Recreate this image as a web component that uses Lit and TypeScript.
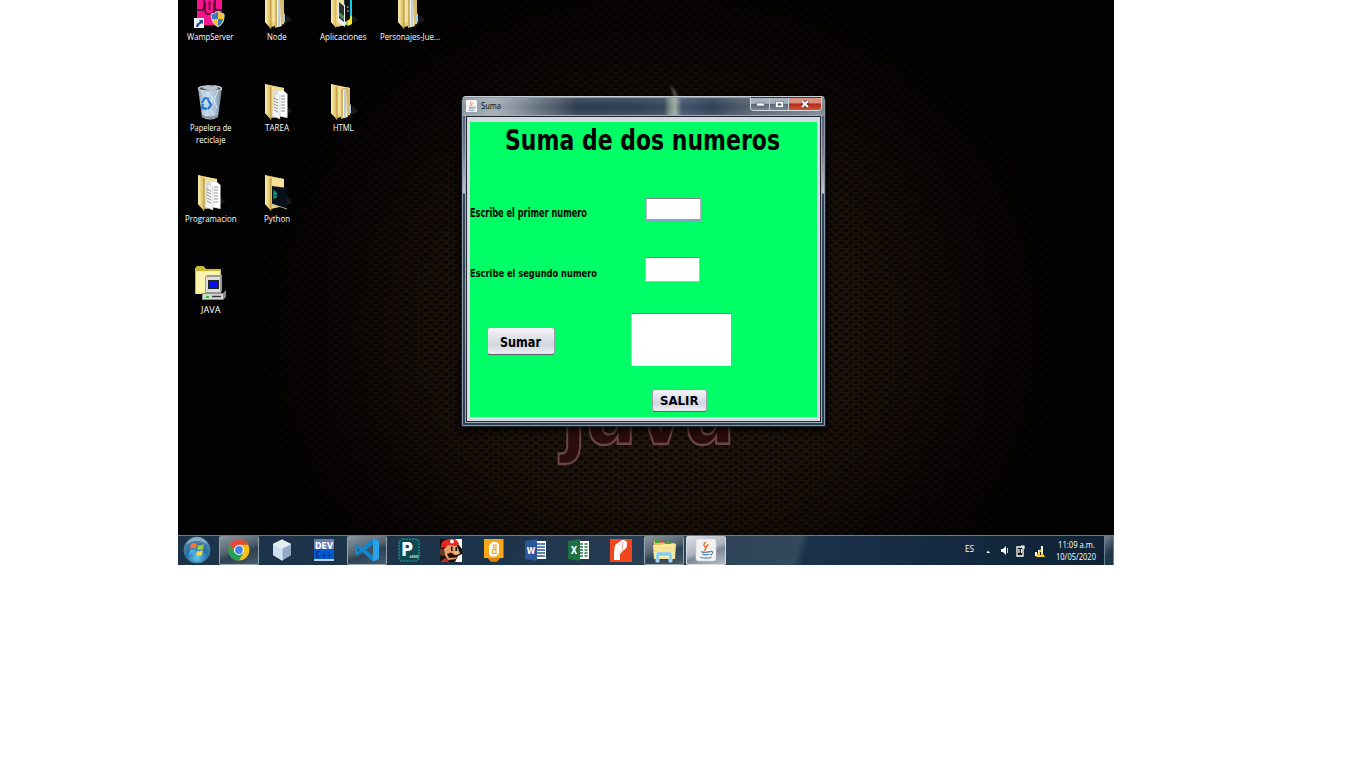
import { LitElement, html, css, svg } from 'lit';
import { customElement } from 'lit/decorators.js';
import { classMap } from 'lit/directives/class-map.js';

type Line = [string, number];
interface Shortcut { icon: string; lines: Line[]; }

const ROWS: Shortcut[][] = [
  [
    { icon: 'wamp', lines: [['WampServer', 46.5]] },
    { icon: 'folder', lines: [['Node', 19.5]] },
    { icon: 'apps', lines: [['Aplicaciones', 46.5]] },
    { icon: 'folder', lines: [['Personajes-Jue...', 60]] },
  ],
  [
    { icon: 'bin', lines: [['Papelera de', 41.5], ['reciclaje', 29.5]] },
    { icon: 'docs', lines: [['TAREA', 24]] },
    { icon: 'folder', lines: [['HTML', 20.5]] },
  ],
  [
    { icon: 'docs', lines: [['Programacion', 51.5]] },
    { icon: 'python', lines: [['Python', 26]] },
  ],
  [{ icon: 'pc', lines: [['JAVA', 19.5]] }],
];

const folderBack = svg`
  <path d="M38 33 L48 27 L43 22Z" fill="#444" opacity=".4"/>
  <path d="M21 0 L40 4 L40 31 L27 34 L21 29Z" fill="#e9cf78"/>
  <path d="M27 2 L40 4 L40 30 L27 30Z" fill="#f3df97"/>`;
const folderFront = svg`
  <path d="M21 0 L27 3 L27 36 L21 29Z" fill="url(#fy)"/>
  <path d="M27 3 L27 36" stroke="#a58737" stroke-width=".8"/>`;

const DESK: Record<string, unknown> = {
  folder: svg`${folderBack}
    <path d="M31 5 L38 3 L38 33 L31 35Z" fill="#cdb264"/>
    <path d="M33 6 L36 5 L37 33 L33 34Z" fill="#f4f4f2"/><path d="M35 6v27" stroke="#8fa6b8"/>
    <path d="M37 4 L40 5 L40 20 L41 21 L41 29 L37 31Z" fill="#d9bd68"/>
    <path d="M39 22h2v7h-2z" fill="#9fd0ee"/>${folderFront}`,
  apps: svg`${folderBack}
    <path d="M33 0H42V30L37 33Z" fill="#15c8ee"/><path d="M37 24L42 23V31L38 33Z" fill="#f5e733"/>
    <path d="M34 1L40 2V26L35 29Z" fill="#111"/><path d="M37 14h1.5M37 18h1.5" stroke="#fff"/>
    <path d="M28 8L35 12V34L28 29Z" fill="#eee"/><path d="M29 9L34 13V29L29 25Z" fill="#27362f"/>
    <path d="M29 19l5 4v4l-5-4z" fill="#4b8f63"/><path d="M21 0 L26 3 L26 35 L21 29Z" fill="url(#fy)"/>`,
  docs: svg`${folderBack}
    <path d="M29 7L36 5L37 31L29 34Z" fill="#dcdcdc"/>
    <path d="M34 7L40 7L43.500 10V34L34 32Z" fill="#fff"/>
    <path d="M31 9L36 12V35L28 32Z" fill="#f4f4f4" stroke="#bbb" stroke-width=".5"/>
    <path d="M30 14l4 2M30 17l4 2M30 20l4 2M30 23l4 2M30 26l4 2M37 12h4M37 15h4M37 18h4M37 21h4M37 24h4M37 27h4" stroke="#777" stroke-width=".8"/>${folderFront}`,
  python: svg`${folderBack}
    <path d="M28 11L43 13V34L28 29Z" fill="#07101a"/><path d="M28 29L43 34" stroke="#bbb" stroke-width=".8"/>
    <path d="M29 15q4 0 4 5q-1 4-4 4z" fill="#0d6b85"/><path d="M30 18l3 1M30 22h3" stroke="#21bd59" stroke-width="1.200"/>${folderFront}`,
  wamp: svg`
    <path d="M20 0H45V26Q45 32 39 32H22Q20 32 20 29Z" fill="#f6138c"/>
    <path d="M20 17h5q2 0 2-3V0M45 17h-5q-2 0-2-3V0M28 9v8q0 4 3 4h3q3 0 3-4V9M32.500 8v9" fill="none" stroke="#5c0b3b" stroke-width="1.800"/>
    <path d="M17 25H27V35H17Z" fill="#eef2f8"/><path d="M19 34q0-4 4-5l-1-2h4v4l-1-1q-3 1-4 4z" fill="#1c4d96"/>
    <path d="M34 21q4 0 7-3q3 3 6 3q1 9-6 13q-7-4-7-13z" fill="#f4c437"/>
    <path d="M41 18q-3 3-7 3v5h7zM41 26h5q-1 5-5 8z" fill="#3b78bd"/>
    <path d="M41 18q-3 3-7 3q0 9 7 13q7-4 6-13q-3 0-6-3z" fill="none" stroke="#cfd8df" stroke-width="1"/>`,
  bin: svg`
    <path d="M21 4L45 4L41 33Q33 38 25 33Z" fill="url(#glass)"/>
    <path d="M24 7l5 8-3 7M41 7l-4 9 3 8M30 8l6 6-4 9 5 8" fill="none" stroke="#eaf2f8" opacity=".8"/>
    <ellipse cx="33" cy="4.500" rx="11.500" ry="2.700" fill="#42505b" stroke="#cbd7de" stroke-width="1.200"/>
    <path d="M25 4l5-3 5 2 4-2 2 4-8 2z" fill="#b7c5d0"/>
    <path d="M25 33q8 4 16 0l0-2q-8 3-16.500 0z" fill="#888f94"/>
    <path d="M25 19l3-5 4 1M31 16l3 5-3 4M30 25l-5-1 1-4" fill="none" stroke="#2a7ad6" stroke-width="2.300"/>`,
  pc: svg`
    <path d="M18 3L20 0H26L29 3H44V28H18Z" fill="#f7ef93"/><path d="M18 3L20 0H26L29 3H44V8H43V5H19V28H18Z" fill="#c9b93a"/>
    <path d="M20 6h22v20H20z" fill="#fbf5b1"/>
    <path d="M28 11L30 9H45V25L43 27H28Z" fill="#9a9a9a"/><path d="M29 11H43V26H29Z" fill="#dedede"/>
    <path d="M31 14H42V23H31Z" fill="#222"/><path d="M32 15H41V22H32Z" fill="#0610e8"/>
    <path d="M25 27L46 27L49 24L49 31L46 34H25Z" fill="#8b8b8b"/><path d="M26 28H46V33H26Z" fill="#d6d6d6"/>
    <path d="M29 30h3v2h-3z" fill="#13cf22"/><path d="M35 30.500h9" stroke="#333" stroke-width="1.500"/>`,
};

const cup = svg`
  <path d="M14 4q-4 3-2 5q3 3 0 6M17 7q-3 2-2 4" fill="none" stroke="#e8702a" stroke-width="1.800"/>
  <path d="M8 16q5 2 11 0M9 19q5 2 9 0M7 23q7 2.500 14 0M19 16q4-1 3 2q-1 2-3 2" fill="none" stroke="#5b84a6" stroke-width="1.500"/>`;

const TASKS: { name: string; state?: string; art: unknown }[] = [
  { name: 'start', art: svg`
    <circle cx="14" cy="14" r="13" fill="url(#orb)" stroke="#4d7f9f" stroke-width=".8"/>
    <path d="M8 8q3-2 6 0l-1 5q-3-2-6 0z" fill="#f07a30"/><path d="M15 9q3 1 6-1l-1 5q-3 2-6 0z" fill="#9bcf47"/>
    <path d="M7 14q3-2 6 0l-1 5q-3-2-6 0z" fill="#4aa7e8"/><path d="M14 15q3 1 6-1l-1 5q-3 2-6 0z" fill="#fbd33f"/>
    <path d="M3 9q4-8 11-8t11 8q-5-4-11-4t-11 4z" fill="#fff" opacity=".35"/>` },
  { name: 'chrome', state: 'on', art: svg`
    <circle cx="14" cy="14" r="10.500" fill="#fbc116"/>
    <path d="M4.900 8.700A10.500 10.500 0 0 1 23.100 8.700H14L9.500 16.500Z" fill="#df4a3c"/>
    <path d="M4.900 8.700A10.500 10.500 0 0 0 14 24.500L18.500 16.600L9.500 16.600Z" fill="#20a15c"/>
    <circle cx="14" cy="14" r="5" fill="#fff"/><circle cx="14" cy="14" r="3.900" fill="#4285f0"/>` },
  { name: 'cube', art: svg`
    <path d="M14 3.500L23 8V19L14 24.500L5 19V8Z" fill="#c2d7e2"/><path d="M14 3.500L23 8L14 12.500L5 8Z" fill="#e4f0f0"/>
    <path d="M14 12.500L23 8V19L14 24.500Z" fill="#92aac4"/><path d="M5 8L14 12.500V24.500L5 19Z" fill="#cddff0"/>
    <path d="M5 8L14 12.500L23 8M14 12.500V24.500" fill="none" stroke="#edf7ff" stroke-width=".7"/>` },
  { name: 'dev', art: svg`
    <path d="M4 3H24V14H4Z" fill="#6c7cb4"/><path d="M4 13H24V25H4Z" fill="#075bd2"/><path d="M4 23H24V25H4Z" fill="#bcd0ee"/>
    <text x="14" y="12.500" class="glyph" font-size="8.500" textLength="18" lengthAdjust="spacingAndGlyphs" fill="#fff">DEV</text>
    <text x="14" y="22" class="glyph" font-size="9" textLength="17" lengthAdjust="spacingAndGlyphs" fill="#052b82">C++</text>` },
  { name: 'code', state: 'on', art: svg`
    <path d="M20 2.500L26 5V23L20 25.500L9 16L4.500 19.500L2.500 18.500V9.500L4.500 8.500L9 12Z" fill="#1087cf"/>
    <path d="M20 8.500V19.500L12.500 14Z" fill="#3b5466"/><path d="M4.500 11.500V16.500L7 14Z" fill="#3b5466"/>
    <path d="M20 2.500L26 5V23L20 25.500Z" fill="#2ba2e8"/>` },
  { name: 'pse', art: svg`
    <rect x="4" y="3" width="20" height="22" rx="4" fill="#0c4850" stroke="#23868a" stroke-width="1.500" stroke-dasharray="2 1"/>
    <text x="12" y="20" class="glyph" font-size="20" textLength="12" lengthAdjust="spacingAndGlyphs" fill="#fff">P</text>
    <text x="19" y="21.500" class="glyph" font-size="4.500" textLength="9" lengthAdjust="spacingAndGlyphs" fill="#c6e7e7">seInt</text>` },
  { name: 'mario', art: svg`
    <path d="M3 3H25V26H3Z" fill="#17110f"/><path d="M18 3H25V13L20 7Z" fill="#fff"/><path d="M4 12Q3 4 12 3Q20 2 22 8L20 10L8 11Z" fill="#e32820"/>
    <circle cx="15" cy="5.500" r="2" fill="#fff"/><path d="M7 13L11 9L20 10L22 15L23 17L19 23L11 24L7 18Z" fill="#e3a06d"/>
    <path d="M10 18L14 16.500L18 19L23 18L20 21.500L12 22Z" fill="#2a120c"/><path d="M3 13L7 13L8 18L6 20L3 19Z" fill="#6c3a20"/>
    <path d="M14 11L15.500 10V15H14ZM18.500 11L20 11V15H18.500Z" fill="#111"/><circle cx="19" cy="17" r="2" fill="#eeb486"/>
    <path d="M21 20L25 18V26H18Z" fill="#fff"/><path d="M8 22L12 24L11 26H3Z" fill="#c82a1c"/>` },
  { name: 'orange', art: svg`
    <path d="M4 3H23.500V22H20L17 25.500H11L8 22H4Z" fill="#fba71b"/><path d="M8 22H20L17 25.500H11Z" fill="#d98307"/>
    <path d="M12 6H17L19 9V17L16 20.500H11L9 18V10Z" fill="#fff"/><path d="M13.500 9h2.500v3h-2.500zM12.500 13.500h3.500v4h-3.500z" fill="none" stroke="#f5a221" stroke-width="1.200"/>` },
  { name: 'word', art: svg`
    <path d="M13 5H24V23H13Z" fill="#fff"/><path d="M15 8h8M15 11h8M15 14h8M15 17h8M15 20h8" stroke="#2b5797" stroke-width="1.300"/>
    <path d="M3 5L15 3V25L3 23Z" fill="#2b579a"/><text x="9" y="17.500" class="glyph" font-size="9.500" textLength="8.500" lengthAdjust="spacingAndGlyphs" fill="#fff">W</text>` },
  { name: 'excel', art: svg`
    <path d="M13 5H24V23H13Z" fill="#fff"/><path d="M15 8h3M19.500 8h3M15 11h3M19.500 11h3M15 14h3M19.500 14h3M15 17h3M19.500 17h3M15 20h3M19.500 20h3" stroke="#217346" stroke-width="1.500"/>
    <path d="M3 5L15 3V25L3 23Z" fill="#1d7044"/><text x="9" y="18" class="glyph" font-size="10" textLength="6.500" lengthAdjust="spacingAndGlyphs" fill="#fff">X</text>` },
  { name: 'pdf', art: svg`
    <path d="M3 3H25V26H3Z" fill="#f1471d"/><path d="M8 9L15 4L16 15L13 18V24H7V17Z" fill="#fff"/><path d="M15 4Q21 4 20 9Q20 13 15 15Z" fill="#fff"/><path d="M15.500 6V14L12.500 17" fill="none" stroke="#f1a08b" stroke-width=".8"/>` },
  { name: 'explorer', state: 'on', art: svg`
    <path d="M4 5H12L14 7H25V23H4Z" fill="#e4c363"/><path d="M5 4h5v3H5zM15 6h6v2h-6z" fill="#4aa23d"/><path d="M10 4.500h3v2h-3z" fill="#df4438"/>
    <path d="M3 9H12L14 8H26L25 23H4Z" fill="#fae99b"/><path d="M4 12H25M4 15H25" stroke="#ecd277" stroke-width=".8"/>
    <path d="M6 26V18Q6 16 8 16H20Q22 16 22 18V26H19V20H9V26Z" fill="#88cceb" stroke="#d4f2ff" stroke-width=".7"/>` },
  { name: 'java', state: 'on bright', art: svg`
    <rect x="4" y="3" width="20" height="22" rx="2.500" fill="#f2f2f2" stroke="#d0d3d6" stroke-width=".6"/><g transform="translate(2.800 2.800) scale(.8)">${cup}</g>` },
];

/* Single line of text fitted to a fixed advance width. */
const fit = (t: string, w: number, h: number, base: number, size: number, cls = '') => html`
  <svg class=${'fit ' + cls} width=${w} height=${h}><text x="0" y=${base} font-size=${size}
    textLength=${w} lengthAdjust="spacingAndGlyphs">${t}</text></svg>`;

@customElement('app-root')
export class AppRoot extends LitElement {
  static styles = css`
    :host { display: block; width: 1366px; height: 768px; background: #fff; overflow: hidden; font-family: "Open Sans", "Noto Sans", sans-serif; }
    svg { display: block; flex: none; }
    .fit { overflow: visible; }
    .desk { position: relative; width: 936px; height: 565px; margin-left: 178px; overflow: hidden; display: flex; flex-direction: column; background: #030202; }
    .wall { position: absolute; left: 0; top: 0; }
    .brand { font-family: "DejaVu Sans", sans-serif; font-weight: 700; filter: blur(.7px); }
    .steam { filter: blur(.8px); }
    .icons { position: relative; flex: 1; margin: -7px 0 0 -1px; }
    .row { display: flex; height: 91px; }
    .item { width: 66.5px; display: flex; flex-direction: column; align-items: center; }
    .item .fit { fill: #fff; }
    .glyph { font-family: "DejaVu Sans", sans-serif; font-weight: 700; text-anchor: middle; }

    .win { position: absolute; left: 283px; top: 96px; width: 365px; height: 331px; box-sizing: border-box; padding: 1px 4px 4px; border: 1px solid #1b232d; border-top-color: #c9d0d7; border-radius: 5px 5px 2px 2px;
      background: linear-gradient(#77828f 0, #55616f 20px, #6c7885 50px, #c3c8ce 96px, #334557 97px, #2b4056 100%);
      box-shadow: inset 0 0 0 1px #8b98a6, 0 2px 7px 2px rgba(0,0,0,.75); }
    .bar { height: 18px; display: flex; align-items: flex-start; margin: 0 -3px; padding-left: 3px;
      background: linear-gradient(rgba(255,255,255,.12), rgba(255,255,255,0) 50%, rgba(255,255,255,.12)), linear-gradient(90deg, #8a94a0 0, #a3abb4 30px, #8c96a1 50px, #5e6a78 80px, #2b3b4e 115px, #2c3e52 170px, #35465a 201px, #72827e 206px, #9dab9f 212px, #40516a 219px, #2f4055 250px, #56626f 290px, #7b8591 100%); }
    .cupbox { margin-top: 2px; }
    .cap { margin: 0 0 0 4px; fill: #050505; }
    .ctl { display: flex; margin-left: auto; margin-right: 2px; margin-top: -1px; height: 14px; border: 1px solid #d5dae0; border-top-color: #333c48; border-radius: 0 0 4px 4px; overflow: hidden; box-sizing: border-box; }
    .c { height: 100%; display: flex; align-items: center; justify-content: center; background: linear-gradient(#a9b1ba 0 45%, #596573 50%, #7b8692); border-right: 1px solid #c5cbd2; box-sizing: border-box; }
    .c.min { width: 19px; } .c.max { width: 19px; }
    .c.close { width: 32px; border: 0; background: linear-gradient(#d89083 0 40%, #b32a18 50%, #d0553a); }
    .frame { height: 306px; box-sizing: border-box; border: 1px solid #1e2733; background: #d6d9df; padding: 5px 3px 4px 3px; outline: 1px solid #a2afbb; }
    .panel { height: 295px; background: #00ff66; box-sizing: border-box; display: flex; flex-direction: column; align-items: flex-start; }
    .panel .fit { font-family: "DejaVu Sans", sans-serif; font-weight: 700; fill: #000; }
    .title { height: 76px; padding-left: 35px; box-sizing: border-box; }
    .line { display: flex; justify-content: space-between; width: 231px; }
    .one { margin-bottom: 36px; } .two { margin-bottom: 31px; width: 230px; }
    .inp { width: 55px; box-sizing: border-box; background: #fff; border: 1px solid #bbb9bb; border-top-color: #7e8a80; }
    .one .inp { height: 23px; border: 2px solid #b9b1c5; border-width: 1px 1px 2px; border-top-color: #7f8690; border-bottom-color: #7fa6c6; }
    .two .inp { height: 25px; }
    .calc { display: flex; padding-left: 17px; height: 53px; gap: 76px; margin-bottom: 23px; }
    .area { width: 100px; background: #fff; border: 1px solid #d7d7d7; border-width: 1px 0 0 1px; border-top-color: #77877c; box-sizing: border-box; }
    .btn { box-sizing: border-box; border: 1px solid #9aa0a8; border-bottom-color: #5a6068; border-radius: 3px; background: linear-gradient(#f5f6f9, #dcdfe6 45%, #d2d6df 65%, #eceef5); display: flex; justify-content: center; }
    .sum { width: 68px; height: 28px; margin-top: 14px; padding-right: 1px; } .exit { width: 55px; height: 23px; margin-left: 182px; padding-right: 1px; }

    .task { position: relative; height: 30px; box-sizing: border-box; border-top: 1px solid #6d7d89; display: flex; align-items: stretch;
      background: linear-gradient(105deg, #1d3349 0, #1e344b 35%, #2d4157 55%, #34485d 66%, #1a3149 67%, #152b42 80%, #0f2134 100%); }
    .t { width: 42.450px; display: flex; align-items: center; justify-content: center; box-sizing: border-box; flex: none; }
    .t:first-child { width: 40px; padding-right: 3px; }
    .plate { width: 40px; height: 29px; display: flex; align-items: flex-start; justify-content: center; box-sizing: border-box; border: 1px solid transparent; border-top: 0; border-radius: 2px; }
    .plate.on { border-color: #98a4af; background: linear-gradient(160deg, #8a97a3 0, #54646f 45%, #2f4252 60%, #465a6a); }
    .plate.bright { background: linear-gradient(160deg, #dde2e7 0, #a8b1bb 50%, #7d8996 60%, #b4bdc6); border-color: #d5dbe0; }
    .tray { margin-left: auto; display: flex; align-items: center; fill: #fff; }
    .lang { margin: -4px 10px 0 0; }
    .clock { display: flex; flex-direction: column; align-items: center; margin: 0 8px 0 10px; }
    .peek { width: 10px; align-self: stretch; box-sizing: border-box; border: 1px solid #6b7c8c; border-width: 0 1px; background: linear-gradient(135deg, #75838f, #20364a 60%); }
  `;

  render() {
    return html`
      <div class="desk">
        <svg class="wall" width="936" height="536">
          <defs>
            <radialGradient id="glow" gradientUnits="userSpaceOnUse" cx="0" cy="0" r="1" gradientTransform="translate(480 330) scale(410 360)">
              <stop offset="0" stop-color="#2a1c0f"/><stop offset=".5" stop-color="#1a110a"/><stop offset=".8" stop-color="#0c0705"/><stop offset="1" stop-color="#030202"/>
            </radialGradient>
            <pattern id="mesh" width="10" height="8" patternUnits="userSpaceOnUse">
              <rect x="1" y="1" width="4" height="3" fill="#000"/><rect x="6" y="5" width="4" height="3" fill="#000"/>
            </pattern>
            <linearGradient id="steam" x1="0" y1="0" x2="0" y2="1"><stop offset="0" stop-color="#4a4438"/><stop offset="1" stop-color="#a8ada0"/></linearGradient>
          </defs>
          <rect width="936" height="536" fill="url(#glow)"/>
          <rect width="936" height="536" fill="url(#mesh)" opacity=".6"/>
          <path class="steam" d="M492 85 Q499 90 503 104 L502 118 L494 118 Q498 98 492 85Z" fill="url(#steam)"/>
          <text class="brand" x="383" y="444" font-size="90" textLength="174" lengthAdjust="spacingAndGlyphs" fill="#2b0d0c" stroke="#6b4644" stroke-width="2.400">java</text>
        </svg>

        <div class="icons">
          ${ROWS.map((r) => html`<div class="row">${r.map((s) => html`
            <div class="item">
              <svg width="66" height="36" viewBox="0 0 66 36">
                <defs>
                  <linearGradient id="fy"><stop offset="0" stop-color="#fdf0ae"/><stop offset="1" stop-color="#d6b658"/></linearGradient>
                  <linearGradient id="glass"><stop offset="0" stop-color="#8da4b8"/><stop offset=".35" stop-color="#c9dcec"/><stop offset=".7" stop-color="#adc3d6"/><stop offset="1" stop-color="#6e8294"/></linearGradient>
                </defs>${DESK[s.icon]}
              </svg>
              ${s.lines.map(([t, w]) => fit(t, w, 12, 11, 9))}
            </div>`)}</div>`)}
        </div>

        <div class="win">
          <div class="bar">
            <svg class="cupbox" width="11" height="12" viewBox="2 1 24 26"><rect x="2" y="1" width="24" height="26" fill="#f4f4f4"/>${cup}</svg>
            ${fit('Suma', 20, 16, 11, 9, 'cap')}
            <div class="ctl">
              <div class="c min"><svg width="9" height="5"><rect x=".5" y="1" width="8" height="3" fill="#fff" stroke="#3d4854" stroke-width=".6"/></svg></div>
              <div class="c max"><svg width="9" height="7"><path d="M.5 .5H8.500V6.500H.5ZM3 2.700V4.300H6V2.700Z" fill="#fff" fill-rule="evenodd" stroke="#3d4854" stroke-width=".5"/></svg></div>
              <div class="c close"><svg width="10" height="8"><path d="M2 1L8 7M8 1L2 7" stroke="#4c3238" stroke-width="3.200"/><path d="M2 1L8 7M8 1L2 7" stroke="#fff" stroke-width="2"/></svg></div>
            </div>
          </div>
          <div class="frame">
            <div class="panel">
              <div class="title">${fit('Suma de dos numeros', 275, 40, 27.5, 28)}</div>
              <div class="line one">${fit('Escribe el primer numero', 117, 23, 19, 11.5)}<div class="inp"></div></div>
              <div class="line two">${fit('Escribe el segundo numero', 127, 25, 19.5, 10)}<div class="inp"></div></div>
              <div class="calc"><div class="btn sum">${fit('Sumar', 41, 26, 18.5, 13.3)}</div><div class="area"></div></div>
              <div class="btn exit">${fit('SALIR', 38.5, 20, 15, 12.8)}</div>
            </div>
          </div>
        </div>

        <div class="task">
          ${TASKS.map((t) => html`<div class="t"><div class=${classMap({ plate: true, on: !!t.state, bright: t.state === 'on bright' })}>
            <svg width="28" height="28" viewBox="0 0 28 28"><defs><radialGradient id="orb" cx=".5" cy=".8" r=".8"><stop offset="0" stop-color="#5ec8ee"/><stop offset=".5" stop-color="#2373a5"/><stop offset="1" stop-color="#5b86a3"/></radialGradient></defs>${t.art}</svg>
          </div></div>`)}
          <div class="tray">
            <div class="lang">${fit('ES', 9, 14, 10, 9)}</div>
            <svg width="62" height="16" viewBox="0 0 62 16">
              <path d="M2.500 10L4 7.500L6 10Z"/>
              <path d="M17 6h2l3-3v9l-3-3h-2z"/><path d="M23.500 5v5" stroke="#ccd" stroke-width="1"/>
              <path d="M33 4h6v9h-6z" fill="#111" stroke="#fff" stroke-width="1.300"/><path d="M35 6v4M37.500 6v4M37 3h3v3" stroke="#fff" stroke-width="1.200" fill="none"/>
              <path d="M51 9h2v4h-2zM54 7h2v6h-2zM57 3h2v10h-2z"/><path d="M56 6L61 14H52Z" fill="#f5cf1d"/><path d="M56.500 9v3" stroke="#222"/>
            </svg>
            <div class="clock">${fit('11:09 a.m.', 37, 12, 8.5, 9)}${fit('10/05/2020', 40, 12, 8.5, 9)}</div>
            <div class="peek"></div>
          </div>
        </div>
      </div>`;
  }
}
